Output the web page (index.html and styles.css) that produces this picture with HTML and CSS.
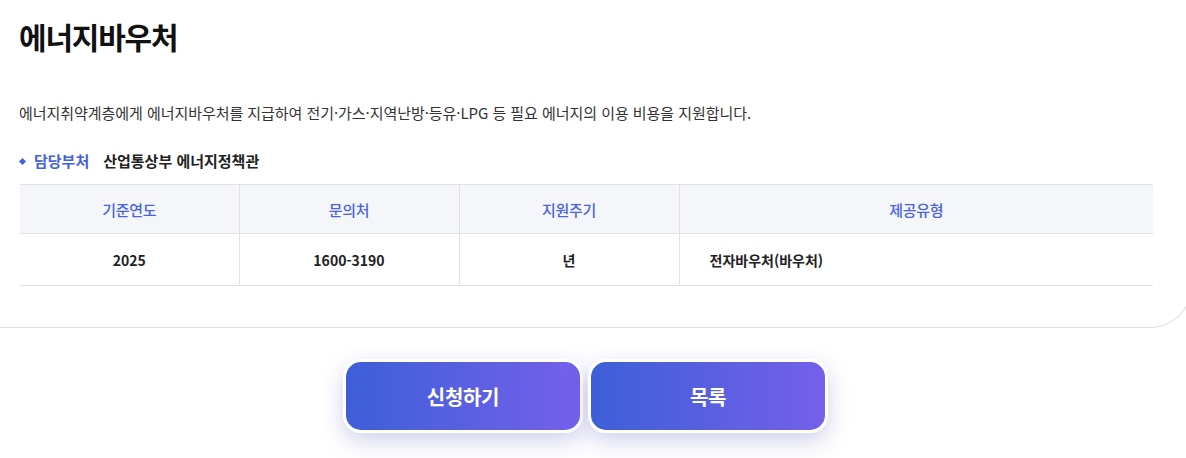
FILE: index.html
```html
<!DOCTYPE html>
<html lang="ko">
<head>
<meta charset="utf-8">
<link rel="stylesheet" href="styles.css">
</head>
<body>
<div class="page">
  <section class="card">
    <h1 class="title">에너지바우처</h1>
    <p class="desc">에너지취약계층에게 에너지바우처를 지급하여 전기·가스·지역난방·등유·LPG 등 필요 에너지의 이용 비용을 지원합니다.</p>
    <div class="dept">
      <span class="dept-label">담당부처</span>
      <span class="dept-value">산업통상부 에너지정책관</span>
    </div>
    <table class="info">
      <colgroup>
        <col class="c1"><col class="c2"><col class="c3"><col class="c4">
      </colgroup>
      <thead>
        <tr><th>기준연도</th><th>문의처</th><th>지원주기</th><th>제공유형</th></tr>
      </thead>
      <tbody>
        <tr><td>2025</td><td>1600-3190</td><td>년</td><td class="left">전자바우처(바우처)</td></tr>
      </tbody>
    </table>
  </section>
  <div class="actions">
    <button class="btn">신청하기</button>
    <button class="btn">목록</button>
  </div>
</div>
</body>
</html>
```
FILE: styles.css
```css
html, body {
  margin: 0;
  padding: 0;
  background: #fff;
  overflow: hidden;
}
body {
  font-family: "Noto Sans CJK KR", "Noto Sans", sans-serif;
  color: #222;
}
.page {
  width: 1186px;
  height: 458px;
  overflow: hidden;
}
.card {
  box-sizing: content-box;
  width: 1133px;
  margin-left: -20px;
  padding: 0 37px 41px 40px;
  border-bottom: 1px solid #e0e0e0;
  border-right: 1px solid #e0e0e0;
  border-bottom-right-radius: 40px;
}
.title {
  margin: 0 0 0 -1px;
  padding-top: 14px;
  font-size: 30px;
  line-height: 44px;
  font-weight: 700;
  color: #111;
  letter-spacing: -1.2px;
}
.desc {
  margin: 44px 0 0 -1px;
  font-size: 15px;
  line-height: 22px;
  color: #333;
  letter-spacing: -0.05px;
}
.dept {
  margin: 26px 0 0 0;
  display: flex;
  align-items: center;
  font-size: 15px;
  line-height: 22px;
  font-weight: 700;
  letter-spacing: 0;
}
.dept-label {
  color: #4361d9;
  position: relative;
  padding-left: 14px;
}
.dept-label::before {
  content: "";
  position: absolute;
  left: 0;
  top: 9px;
  width: 5px;
  height: 5px;
  background: #4361d9;
  transform: rotate(45deg);
}
.dept-value {
  margin-left: 14px;
  color: #222;
}
.info {
  margin: 12px 0 0 0;
  width: 1133px;
  border-collapse: collapse;
  table-layout: fixed;
  font-size: 14px;
}
.c1 { width: 219px; }
.c2, .c3 { width: 220px; }
.info th {
  height: 48px;
  background: #f5f6fa;
  color: #4a63e0;
  font-size: 15px;
  font-weight: 500;
  letter-spacing: -0.3px;
  border-top: 1px solid #e2e2e2;
  border-bottom: 1px solid #e2e2e2;
  border-left: 1px solid #e2e2e2;
  padding: 0;
}
.info td {
  height: 51px;
  text-align: center;
  font-weight: 700;
  color: #222;
  border-bottom: 1px solid #e2e2e2;
  border-left: 1px solid #e2e2e2;
  padding: 0;
}
.info th:first-child, .info td:first-child { border-left: none; }
.info td.left {
  text-align: left;
  padding-left: 30px;
}
.actions {
  display: flex;
  justify-content: center;
  gap: 5px;
  margin-top: 31px;
  padding-right: 15px;
}
.btn {
  box-sizing: border-box;
  width: 240px;
  height: 74px;
  border: 3px solid #fff;
  border-radius: 18px;
  background: linear-gradient(90deg, #3d5fd8 0%, #7560ea 100%);
  color: #fff;
  font-family: "Noto Sans CJK KR", "Noto Sans", sans-serif;
  font-size: 20px;
  font-weight: 700;
  letter-spacing: -0.3px;
  box-shadow: 0 8px 22px rgba(90, 90, 190, 0.28);
  cursor: pointer;
}
```
